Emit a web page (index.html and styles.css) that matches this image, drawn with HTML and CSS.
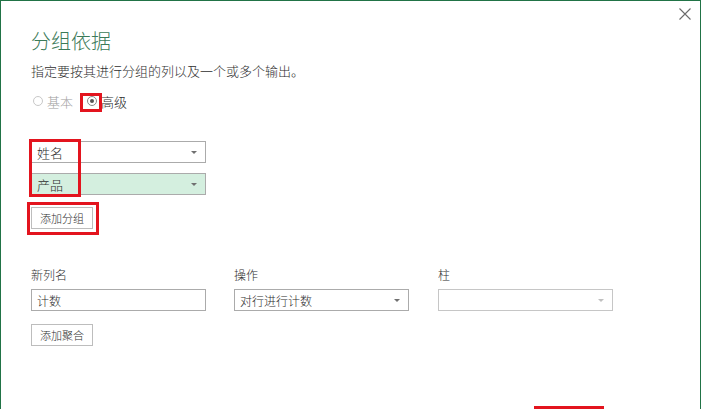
FILE: index.html
```html
<!DOCTYPE html>
<html lang="zh-CN">
<head>
    <meta charset="UTF-8">
    <meta name="viewport" content="width=device-width, initial-scale=1.0">
    <title>分组依据</title>
    <link rel="stylesheet" href="styles.css">
</head>
<body>
    <div class="dialog">
        <div class="topbar">
            <button class="close" aria-label="关闭">
                <svg width="12" height="12" viewBox="0 0 12 12">
                    <path d="M0.5 0.5 L11.5 11.5 M11.5 0.5 L0.5 11.5" stroke="#6b6b6b" stroke-width="1.1" fill="none"/>
                </svg>
            </button>
        </div>

        <h1 class="title">分组依据</h1>
        <p class="desc">指定要按其进行分组的列以及一个或多个输出。</p>

        <div class="mode">
            <label class="radio disabled"><span class="dot"></span>基本</label>
            <label class="radio checked"><span class="dot"></span>高级</label>
        </div>

        <div class="groups">
            <div class="select"><span>姓名</span><i class="arrow"></i></div>
            <div class="select selected"><span>产品</span><i class="arrow"></i></div>
            <button class="btn">添加分组</button>
        </div>

        <div class="aggs">
            <div class="label">新列名</div>
            <div class="label">操作</div>
            <div class="label">柱</div>
            <div class="input">计数</div>
            <div class="select"><span>对行进行计数</span><i class="arrow"></i></div>
            <div class="select disabled"><span></span><i class="arrow"></i></div>
        </div>

        <button class="btn">添加聚合</button>

        <!-- 标注框 -->
        <div class="mark mark-radio"></div>
        <div class="mark mark-cols"></div>
        <div class="mark mark-add"></div>
        <div class="mark mark-ok"></div>
    </div>
</body>
</html>
```

FILE: styles.css
```css
* {
    margin: 0;
    padding: 0;
    box-sizing: border-box;
    font-family: 'Noto Sans CJK SC', 'Noto Sans', sans-serif;
}

body {
    background: white;
    width: 702px;
    height: 409px;
    overflow: hidden;
}

.dialog {
    position: relative;
    width: 701px;
    height: 409px;
    overflow: hidden;
    background: white;
    border: 1px solid #217346;
    border-bottom: none;
    padding: 0 0 0 30px;
    color: #2e2e2e;
    font-weight: 300;
}

.topbar {
    display: flex;
    justify-content: flex-end;
    height: 26px;
    padding: 7px 9px 0 0;
}

.close {
    width: 12px;
    height: 12px;
    border: none;
    background: none;
    display: flex;
}

.title {
    font-size: 20px;
    font-weight: 300;
    line-height: 28px;
    color: #3b7a58;
}

.desc {
    font-size: 13px;
    line-height: 20px;
    margin-top: 6px;
}

.mode {
    display: flex;
    align-items: center;
    height: 20px;
    margin-top: 10px;
    font-size: 13px;
}

.radio {
    display: flex;
    align-items: center;
    gap: 4px;
    padding-left: 2px;
}

.radio + .radio {
    margin-left: 12px;
}

.dot {
    width: 10px;
    height: 10px;
    border: 1px solid #c8c8c8;
    border-radius: 50%;
    position: relative;
}

.radio.disabled {
    color: #a0a0a0;
}

.radio.checked .dot {
    border-color: #8a8a8a;
}

.radio.checked .dot::after {
    content: '';
    position: absolute;
    left: 2px;
    top: 2px;
    width: 4px;
    height: 4px;
    border-radius: 50%;
    background: #555;
}

.groups {
    margin-top: 30px;
    display: flex;
    flex-direction: column;
    align-items: flex-start;
}

.select,
.input {
    width: 175px;
    height: 22px;
    border: 1px solid #ababab;
    background: white;
    display: flex;
    align-items: center;
    justify-content: space-between;
    padding: 0 8px 0 5px;
    font-size: 12px;
}

.groups .select {
    font-size: 13px;
}

.groups .select + .select {
    margin-top: 10px;
}

.select.selected {
    background: #d4efdf;
}

.select.disabled {
    border-color: #c6c6c6;
}

.arrow {
    width: 0;
    height: 0;
    border-left: 3px solid transparent;
    border-right: 3px solid transparent;
    border-top: 3px solid #707070;
}

.select.disabled .arrow {
    border-top-color: #c0c0c0;
}

.btn {
    margin-top: 12px;
    height: 22px;
    width: 62px;
    border: 1px solid #bdbdbd;
    background: white;
    font-size: 11px;
    font-weight: 300;
    color: #2e2e2e;
}

.aggs {
    margin-top: 37px;
    display: grid;
    grid-template-columns: 203px 204px 175px;
    row-gap: 5px;
}

.label {
    font-size: 12px;
    line-height: 18px;
}

.aggs + .btn {
    margin-top: 13px;
}

.mark {
    position: absolute;
    border: 3px solid #e3141e;
}

.mark-radio {
    left: 79px;
    top: 92px;
    width: 22px;
    height: 19px;
}

.mark-cols {
    left: 28px;
    top: 138px;
    width: 52px;
    height: 58px;
}

.mark-add {
    left: 26px;
    top: 201px;
    width: 72px;
    height: 33px;
}

.mark-ok {
    left: 533px;
    top: 405px;
    width: 70px;
    height: 4px;
    border-bottom: none;
}
```
